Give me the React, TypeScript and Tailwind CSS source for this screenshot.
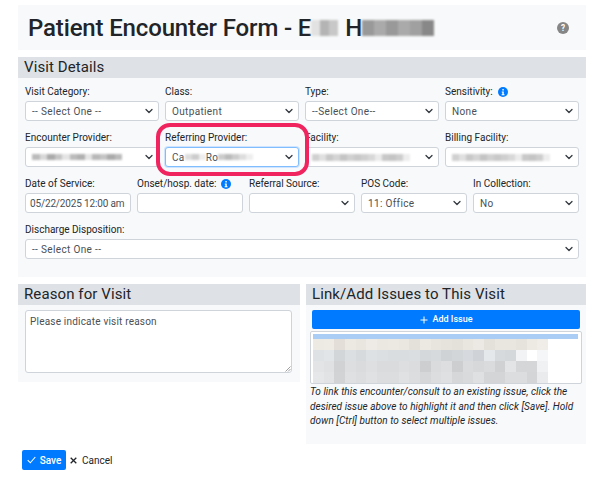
import React from 'react';

const Chevron = () => (
  <svg width="8" height="8" viewBox="0 0 16 16" className="shrink-0" fill="none" stroke="#343a40" strokeWidth="2.6" strokeLinecap="round" strokeLinejoin="round">
    <path d="M2 5l6 6 6-6" />
  </svg>
);

const InfoIcon = () => (
  <svg width="10" height="10" viewBox="0 0 16 16" className="inline-block shrink-0">
    <circle cx="8" cy="8" r="8" fill="#007bff" />
    <rect x="6.8" y="3" width="2.6" height="2.6" rx="1" fill="#fff" />
    <path d="M6 7h3.2v4.4H10.4V13H5.8v-1.6h1.2V8.6H6z" fill="#fff" />
  </svg>
);

// pixelated blur standing in for the redacted names
const Blur = ({ shades, h = 'h-[8px]', w = 'w-[9px]' }: { shades: string[]; h?: string; w?: string }) => (
  <span className="inline-flex blur-[1px]">
    {shades.map((c, i) => (
      <span key={i} className={`${w} ${h}`} style={{ backgroundColor: c }} />
    ))}
  </span>
);

const providerShades = ['#bbb', '#d8d8d8', '#aaa', '#c4c4c4', '#e4e4e4', '#bbb', '#b0b0b0', '#e4e4e4', '#b8b8b8', '#c4c4c4', '#aaa', '#bbb'];
const facilityShades = ['#d0d0d0', '#e0e0e0', '#c8c8c8', '#d4d4d4', '#c4c4c4', '#d0d0d0', '#c8c8c8', '#cfcfcf', '#d8d8d8', '#ebebeb', '#c8c8c8', '#c4c4c4', '#cdcdcd', '#ededed'];

const Label = ({ children }: { children: React.ReactNode }) => (
  <div className="flex h-[13px] items-center gap-[5px] whitespace-nowrap text-[10px] leading-[13px] text-[#212529]">{children}</div>
);

const SelectBox = ({ children, focus }: { children?: React.ReactNode; focus?: boolean }) => (
  <div
    className={`mt-[3px] flex h-[20px] items-center justify-between rounded-[3px] border bg-white pl-[6px] pr-[5px] text-[10px] tracking-[0.35px] text-[#495057] ${
      focus ? 'border-[#80bdff] ring-1 ring-[#cfe5ff]' : 'border-[#ced4da]'
    }`}
  >
    <span className="flex items-center whitespace-nowrap">{children}</span>
    <Chevron />
  </div>
);

const TextBox = ({ value }: { value?: string }) => (
  <div className="mt-[3px] flex h-[20px] items-center overflow-hidden whitespace-nowrap rounded-[3px] border border-[#ced4da] bg-white px-[4px] text-[10px] tracking-[-0.15px] text-[#495057]">
    {value}
  </div>
);

const Field = ({ label, children }: { label: React.ReactNode; children: React.ReactNode }) => (
  <div>
    <Label>{label}</Label>
    {children}
  </div>
);

const SectionHead = ({ children }: { children: React.ReactNode }) => (
  <h3 className="flex h-[21px] items-center bg-[#dee2e6] px-[6px] text-[15px] font-normal tracking-[0.1px] text-[#212529]">{children}</h3>
);

const issueRows = [
  ['#ede9e3', '#eeeae4', '#e3dfd8', '#ece8e2', '#e9e5df', '#eeeae5', '#ebe7e1', '#ece8e2', '#eae6e0', '#e4e0da', '#ece8e2', '#e8e4de', '#e6e2dc', '#e4e1da', '#e9e5df', '#ece8e3', '#e4e1da', '#e9e6e0', '#e9e6e0', '#e6e3dd', '#ede9e3', '#f0ede8'],
  ['#dfe2e5', '#e2e5e7', '#d2d6d9', '#dbdfe2', '#d6dadd', '#dee1e4', '#dbdfe2', '#d9dde0', '#d9dde0', '#dbdee1', '#d4d8db', '#d6dadd', '#cfd3d6', '#d2d6d9', '#d6dade', '#cfd2d6', '#e5e8ea', '#d7dadd', '#d4d8db', '#f2f3f4', '#ffffff', '#f5f6f7'],
  ['#e2e4e6', '#dfe1e3', '#d0d2d4', '#dcdee0', '#d9dbdd', '#dddfe1', '#d9dbdd', '#d9dbdd', '#dcdee0', '#dadcde', '#cccecf', '#d9dbdd', '#dcdee0', '#cccecf', '#d9dbdd', '#d6d8da', '#d9dbdd', '#cfd1d3', '#e2e4e6', '#d4d6d8', '#d4d6d8', '#f0f1f2'],
  ['#e6e7e8', '#e2e3e4', '#d2d3d4', '#dfe0e1', '#dcdddf', '#e0e1e2', '#dcdddf', '#dcdddf', '#e0e1e2', '#dcdddf', '#d6d7d8', '#dcdddf', '#dfe0e1', '#d6d7d8', '#d9dadb', '#dfe0e1', '#d4d5d6', '#d4d5d6', '#dcdddf', '#dcdddf', '#d4d5d6', '#eaebec'],
];

export default function App() {
  return (
    <div className="relative h-[499px] w-[602px] overflow-hidden bg-white pl-[18px] pr-[16px] pt-[5px] font-['Roboto','Liberation_Sans',sans-serif]">
      <header className="flex h-[45px] items-center justify-between bg-[#f8f9fa] pl-[10px] pr-[17px]">
        <h1 className="flex items-center whitespace-nowrap text-[24px] font-medium leading-none tracking-[-0.15px] text-[#212529]">
          Patient Encounter Form - E
          <Blur shades={['#e2e2e2', '#b4b4b4', '#c8c8c8']} h="h-[16px]" />
          <span className="ml-[7px]">H</span>
          <Blur shades={['#999', '#aaa', '#999', '#aaa', '#a0a0a0', '#888']} h="h-[16px]" w="w-[12px]" />
        </h1>
        <svg width="12" height="12" viewBox="0 0 16 16">
          <circle cx="8" cy="8" r="8" fill="#868686" />
          <text x="8" y="12" textAnchor="middle" fontSize="11" fontWeight="700" fill="#fff">?</text>
        </svg>
      </header>

      <section className="relative mt-[7px] h-[220px] bg-[#f8f9fa]">
        <SectionHead>Visit Details</SectionHead>
        <div className="px-[7px] pt-[7px]">
          <div className="grid grid-cols-4 gap-x-[6px] gap-y-[10px]">
            <Field label="Visit Category:"><SelectBox>-- Select One --</SelectBox></Field>
            <Field label="Class:"><SelectBox>Outpatient</SelectBox></Field>
            <Field label="Type:"><SelectBox>--Select One--</SelectBox></Field>
            <Field label={<>Sensitivity: <InfoIcon /></>}><SelectBox>None</SelectBox></Field>
            <Field label="Encounter Provider:"><SelectBox><Blur shades={providerShades} h="h-[6px]" w="w-[7.5px]" /></SelectBox></Field>
            <Field label="Referring Provider:">
              <SelectBox focus>
                Ca<Blur shades={['#ddd', '#ccc', '#eee']} h="h-[6px]" w="w-[7px]" />Ro<Blur shades={['#ccc', '#bbb', '#ccc', '#ddd', '#eee']} h="h-[6px]" w="w-[7px]" />
              </SelectBox>
            </Field>
            <Field label="Facility:"><SelectBox><Blur shades={facilityShades} h="h-[7px]" w="w-[7px]" /></SelectBox></Field>
            <Field label="Billing Facility:"><SelectBox><Blur shades={facilityShades} h="h-[7px]" w="w-[7px]" /></SelectBox></Field>
          </div>
          <div className="mt-[10px] grid grid-cols-5 gap-x-[6px]">
            <Field label="Date of Service:"><TextBox value="05/22/2025 12:00 am" /></Field>
            <Field label={<>Onset/hosp. date: <InfoIcon /></>}><TextBox /></Field>
            <Field label="Referral Source:"><SelectBox /></Field>
            <Field label="POS Code:"><SelectBox>11: Office</SelectBox></Field>
            <Field label="In Collection:"><SelectBox>No</SelectBox></Field>
          </div>
          <div className="mt-[10px]">
            <Field label="Discharge Disposition:"><SelectBox>-- Select One --</SelectBox></Field>
          </div>
        </div>
        {/* annotation drawn over the screenshot */}
        <div className="absolute left-[138px] top-[66px] h-[53px] w-[153px] rounded-[14px] border-[4px] border-[#f0245f]" />
      </section>

      <div className="mt-[7px] grid grid-cols-[282px_280px] gap-x-[6px]">
        <section className="h-[98px] bg-[#f8f9fa]">
          <SectionHead>Reason for Visit</SectionHead>
          <div className="px-[7px] pt-[5px]">
            <div className="relative h-[63px] w-[267px] rounded-[3px] border border-[#ced4da] bg-white px-[4px] py-[3px] text-[10px] leading-[15px] tracking-[0.2px] text-[#495057]">
              Please indicate visit reason
              <svg width="6" height="6" viewBox="0 0 6 6" className="absolute bottom-0 right-0" stroke="#777" strokeWidth="0.7">
                <path d="M0.5 5.5L5.5 0.5M3 5.5L5.5 3" />
              </svg>
            </div>
          </div>
        </section>

        <section className="h-[160px] bg-[#f8f9fa]">
          <SectionHead>Link/Add Issues to This Visit</SectionHead>
          <div className="pt-[5px]">
            <button className="mx-[6px] flex h-[19px] w-[268px] items-center justify-center gap-[5px] rounded-[2px] bg-[#007bff] text-[9px] font-medium text-white">
              <svg width="8" height="8" viewBox="0 0 8 8" stroke="#fff" strokeWidth="1"><path d="M4 0.5v7M0.5 4h7" /></svg>
              Add Issue
            </button>
            <div className="ml-[4px] mt-[2px] h-[53px] w-[272px] rounded-[2px] border border-[#ced4da] bg-white p-[2px]">
              <div className="h-[5px] w-[265px] bg-[#a9cdf5]" />
              {issueRows.map((row, r) => (
                <div key={r} className="flex h-[11px] blur-[0.4px]">
                  {row.map((c, i) => (
                    <span key={i} className="h-full w-[10.7px] shrink-0" style={{ backgroundColor: c }} />
                  ))}
                </div>
              ))}
            </div>
            <p className="mt-[1px] px-[4px] text-[10px] italic leading-[14.5px] tracking-[0.05px] text-[#212529]">
              To link this encounter/consult to an existing issue, click the desired issue above to highlight it and then click [Save]. Hold down [Ctrl] button to select multiple issues.
            </p>
          </div>
        </section>
      </div>

      <div className="absolute left-[22px] top-[450px] flex items-center">
        <button className="flex h-[20px] w-[44px] items-center justify-center gap-[4px] rounded-[2px] bg-[#007bff] text-[10px] font-medium text-white">
          <svg width="9" height="8" viewBox="0 0 9 8" fill="none" stroke="#fff" strokeWidth="1.1"><path d="M0.7 4.2L3.3 6.8L8.3 1" /></svg>
          Save
        </button>
        <button className="ml-[4px] flex items-center gap-[5px] text-[10px] text-[#212529]">
          <svg width="7" height="7" viewBox="0 0 7 7" stroke="#212529" strokeWidth="1.3"><path d="M0.7 0.7l5.6 5.6M6.3 0.7L0.7 6.3" /></svg>
          Cancel
        </button>
      </div>
    </div>
  );
}
